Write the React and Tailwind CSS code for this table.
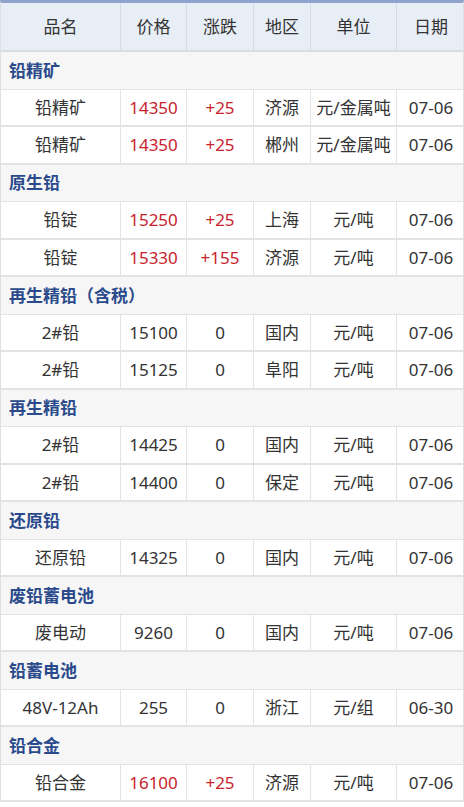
import React from "react";

const sections = [
  { title: "铅精矿", rows: [
    ["铅精矿", "14350", "+25", "济源", "元/金属吨", "07-06", true],
    ["铅精矿", "14350", "+25", "郴州", "元/金属吨", "07-06", true],
  ]},
  { title: "原生铅", rows: [
    ["铅锭", "15250", "+25", "上海", "元/吨", "07-06", true],
    ["铅锭", "15330", "+155", "济源", "元/吨", "07-06", true],
  ]},
  { title: "再生精铅（含税）", rows: [
    ["2#铅", "15100", "0", "国内", "元/吨", "07-06", false],
    ["2#铅", "15125", "0", "阜阳", "元/吨", "07-06", false],
  ]},
  { title: "再生精铅", rows: [
    ["2#铅", "14425", "0", "国内", "元/吨", "07-06", false],
    ["2#铅", "14400", "0", "保定", "元/吨", "07-06", false],
  ]},
  { title: "还原铅", rows: [
    ["还原铅", "14325", "0", "国内", "元/吨", "07-06", false],
  ]},
  { title: "废铅蓄电池", rows: [
    ["废电动", "9260", "0", "国内", "元/吨", "07-06", false],
  ]},
  { title: "铅蓄电池", rows: [
    ["48V-12Ah", "255", "0", "浙江", "元/组", "06-30", false],
  ]},
  { title: "铅合金", rows: [
    ["铅合金", "16100", "+25", "济源", "元/吨", "07-06", true],
  ]},
];

const widths = ["w-[120px]", "w-[66px]", "w-[67px]", "w-[57px]", "w-[86px]", "w-[68px]"];
const headers = ["品名", "价格", "涨跌", "地区", "单位", "日期"];

export default function App() {
  return (
    <div
      className="w-[464px] h-[807px] bg-white text-[17px] text-[#333]"
      style={{ fontFamily: '"Noto Sans", "Noto Sans CJK SC", sans-serif' }}
    >
      <div className="border-t-[3px] border-[#8fa2cb] border-x border-x-[#dcdfe4]">
        <div className="flex h-[49px] bg-[#e8eef6] border-b-2 border-[#d9dde3]">
          {headers.map((h, i) => (
            <div
              key={h}
              className={`${widths[i]} shrink-0 flex items-center justify-center ${i < 5 ? "border-r border-[#d6dce6]" : ""}`}
            >
              {h}
            </div>
          ))}
        </div>
        {sections.map((s) => (
          <React.Fragment key={s.title}>
            <div className="h-[37.5px] flex items-center pl-[8px] bg-[#f6f6f6] border-b border-[#e3e3e3] font-bold text-[#2a4a8c]">
              {s.title}
            </div>
            {s.rows.map((r, ri) => (
              <div key={ri} className="h-[37.5px] flex border-b-2 border-[#e3e3e3] bg-white">
                {r.slice(0, 6).map((c, i) => (
                  <div
                    key={i}
                    className={`${widths[i]} shrink-0 flex items-center justify-center ${i < 5 ? "border-r border-[#e3e3e3]" : ""} ${r[6] && (i === 1 || i === 2) ? "text-[#c8232c]" : ""}`}
                  >
                    {c}
                  </div>
                ))}
              </div>
            ))}
          </React.Fragment>
        ))}
      </div>
    </div>
  );
}
